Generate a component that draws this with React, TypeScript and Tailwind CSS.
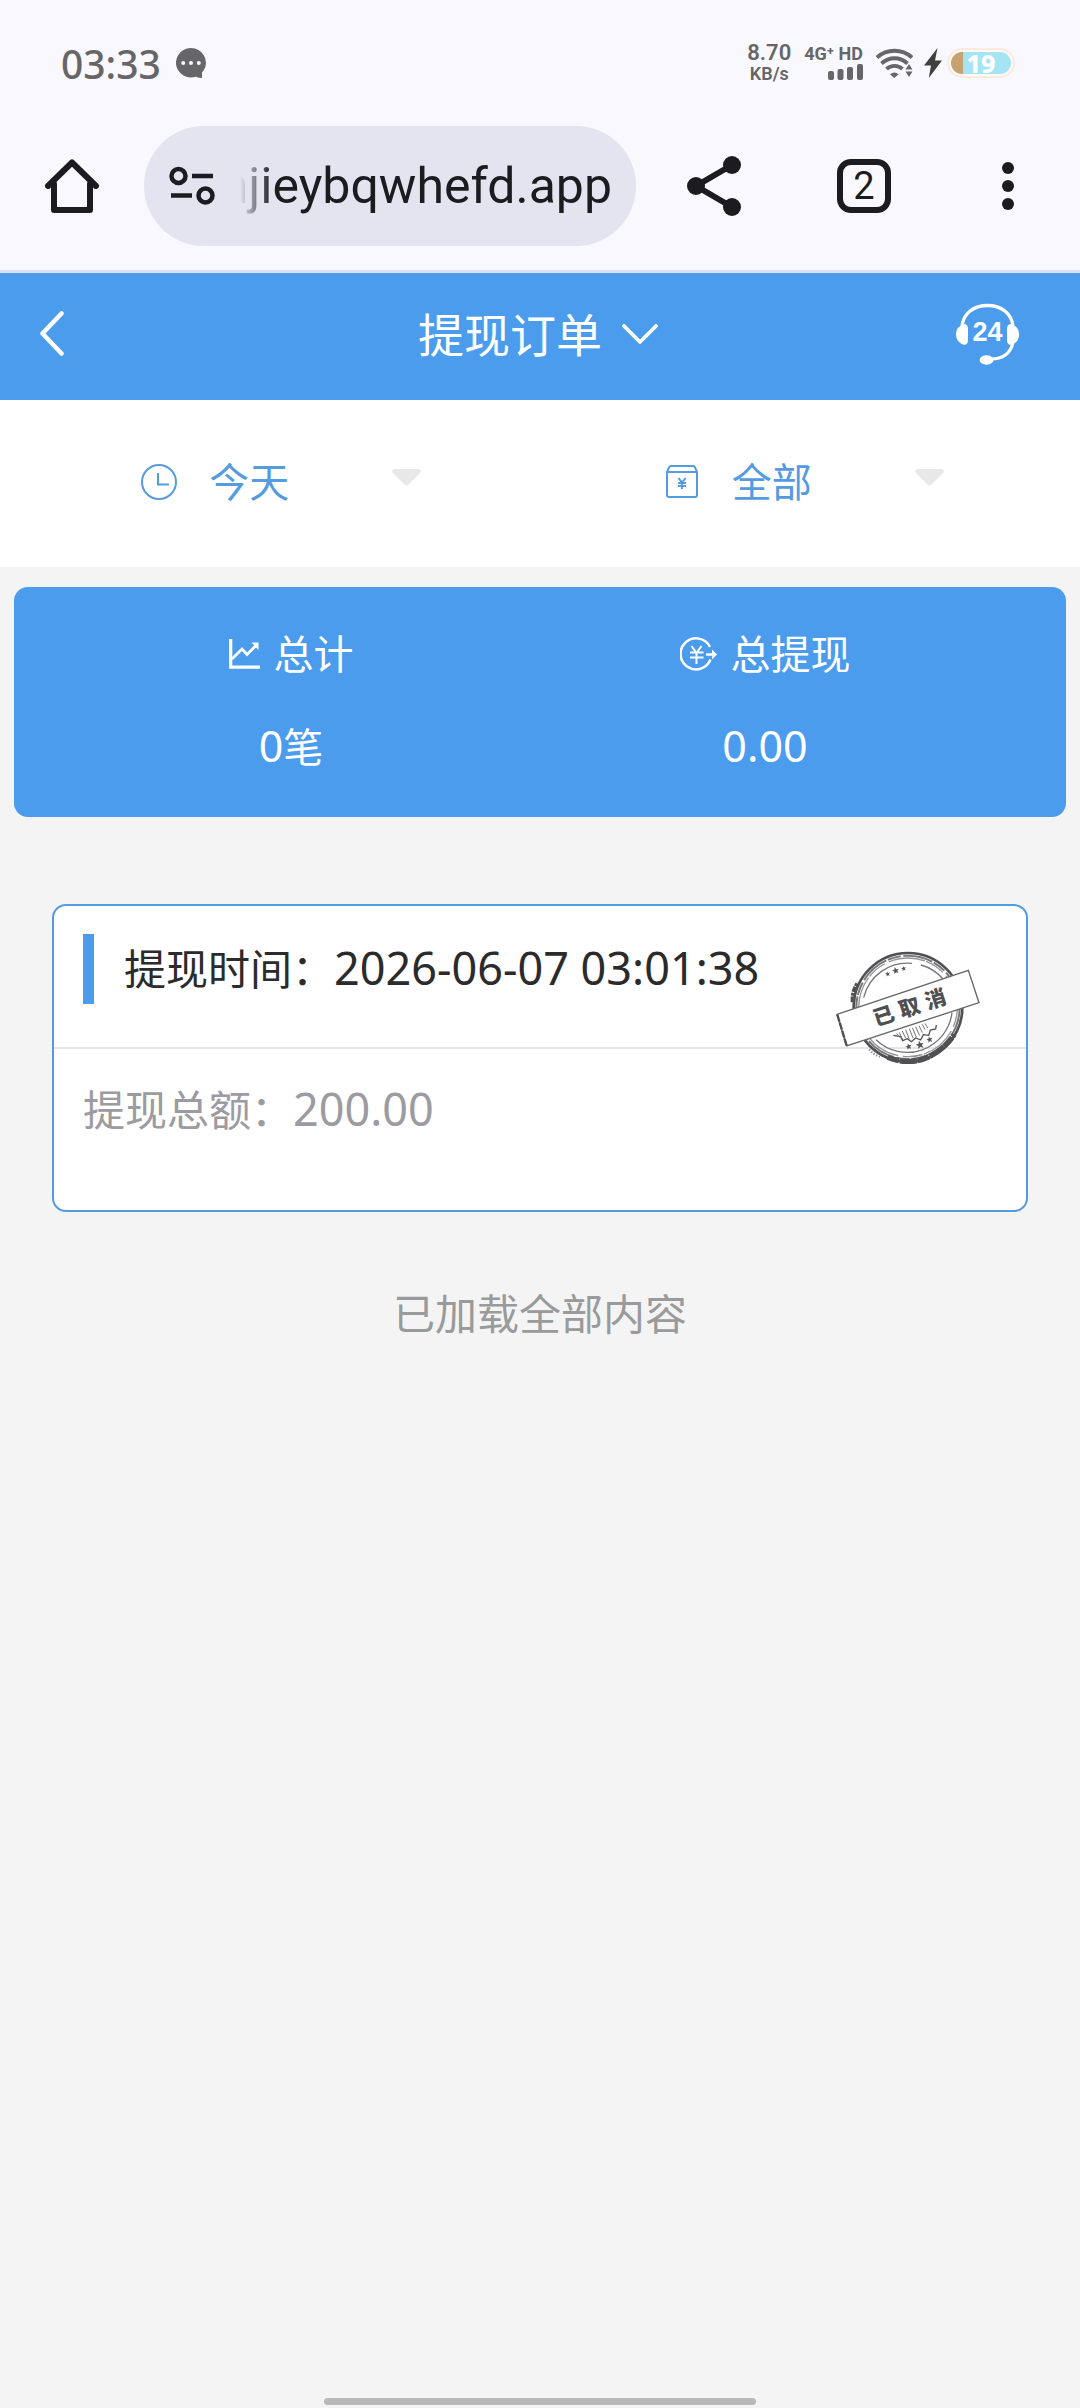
import React from 'react';

const HomeIcon = () => (
  <svg className="w-[54px] h-[54px]" viewBox="0 0 54 54" fill="none" stroke="#1b1b20" strokeWidth="6" strokeLinejoin="round" strokeLinecap="round">
    <path d="M9 25v26h36V25" />
    <path d="M3 27 27 3.500 51 27" />
  </svg>
);

const SiteSettingsIcon = () => (
  <svg className="w-[46px] h-[40px] shrink-0" viewBox="0 0 46 40" fill="none" stroke="#1b1b20">
    <circle cx="9.500" cy="10" r="7" strokeWidth="4.500" />
    <circle cx="36.500" cy="29.500" r="7" strokeWidth="4.500" />
    <path d="M23 10h21M2 29.500h21" strokeWidth="4.500" />
  </svg>
);

const ShareIcon = () => (
  <svg className="w-[54px] h-[60px]" viewBox="0 0 54 60" fill="#1b1b20">
    <path d="M45 9 9 30l36 21" fill="none" stroke="#1b1b20" strokeWidth="6" />
    <circle cx="45" cy="9" r="9" />
    <circle cx="9" cy="30" r="9" />
    <circle cx="45" cy="51" r="9" />
  </svg>
);

const MoreIcon = () => (
  <svg className="w-[12px] h-[48px]" viewBox="0 0 12 48" fill="#1b1b20">
    <circle cx="6" cy="6" r="6" />
    <circle cx="6" cy="24" r="6" />
    <circle cx="6" cy="42" r="6" />
  </svg>
);

const MessageIcon = () => (
  <svg className="w-[30px] h-[30px]" viewBox="0 0 30 30">
    <path d="M15 0a15 14.700 0 1 1-.1 0zM26 21v9q-4 0-8-2z" fill="#666668" />
    <g fill="#f9f8ff">
      <circle cx="7.200" cy="15" r="2" />
      <circle cx="15" cy="15" r="2" />
      <circle cx="22.800" cy="15" r="2" />
    </g>
  </svg>
);

const SignalIcon = () => (
  <svg className="w-[35px] h-[16px]" viewBox="0 0 35 16" fill="#666668">
    <rect x="0" y="7" width="6" height="9" rx="2" />
    <rect x="9.500" y="5" width="6" height="11" rx="2" />
    <rect x="19" y="3" width="6" height="13" rx="2" />
    <rect x="29" y="0" width="6" height="16" rx="2" />
  </svg>
);

const WifiIcon = () => (
  <svg className="w-[37px] h-[30px]" viewBox="0 0 37 30">
    <g fill="none" stroke="#666668" strokeWidth="3.800">
      <path d="M1 9.500C11 .500 26 .500 36 9.500" />
      <path d="M5.500 15.500C13 8.500 24 8.500 31.500 15.500" />
      <path d="M10.500 21C15 16.700 22 16.700 26.500 21" />
    </g>
    <g fill="#666668">
      <path d="M14 26.200q4.500-3.600 8.500 0L18.300 30z" />
      <path d="M33 16l3.500 5.500h-7zM33 29l3.500-5.500h-7z" />
    </g>
  </svg>
);

const BoltIcon = () => (
  <svg className="w-[18px] h-[30px]" viewBox="0 0 18 30" fill="#3f3f3c">
    <path d="M13.500 0 0 17.500h7L4.800 30 18 12.500h-7z" />
  </svg>
);

const HeadsetIcon = () => (
  <svg className="w-[63px] h-[62px]" viewBox="0 0 63 62" fill="#fff">
    <path d="M6 24C7 10 18 2.500 31.500 2.500S56 10 57 24" fill="none" stroke="#fff" strokeWidth="3.400" />
    <path d="M57 40C54 51 47 56 35 56" fill="none" stroke="#fff" strokeWidth="3" />
    <path d="M9 21q3 1 3 5v11q0 4-3 5-9-2-9-10.500T9 21zM54 21q-3 1-3 5v11q0 4 3 5 9-2 9-10.500T54 21z" />
    <ellipse cx="30.500" cy="57" rx="7" ry="4.700" />
    <text x="31.500" y="38" textAnchor="middle" fontFamily="Liberation Sans, sans-serif" fontSize="27" fontWeight="700">24</text>
  </svg>
);

const ClockIcon = () => (
  <svg className="w-[36px] h-[36px]" viewBox="0 0 36 36" fill="none" stroke="#559bdf" strokeWidth="2">
    <circle cx="18" cy="18" r="17" />
    <path d="M17 9v11.500h11" />
  </svg>
);

const WalletIcon = () => (
  <svg className="w-[36px] h-[36px]" viewBox="0 0 36 36" fill="none" stroke="#559bdf" strokeWidth="2">
    <path d="M3 8 5 3.500q.500-1.500 2-1.500h22q1.500 0 2 1.500L33 8v23q0 2-2 2H5q-2 0-2-2zM3 8h30" />
    <path d="m14.500 14 3.500 4.500 3.500-4.500M18 18v7M14 19h8M14 22h8" />
  </svg>
);

const CaretIcon = () => (
  <svg className="w-[29px] h-[17px] mb-2 shrink-0 pointer-events-none" viewBox="0 0 29 17" fill="#e8e8e8">
    <path d="M3 0h23q4 1 2.500 3.500L16 16q-1.500 1.500-3 0L.500 3.500Q-1 1 3 0z" />
  </svg>
);

const TrendIcon = () => (
  <svg className="w-[31px] h-[30px]" viewBox="0 0 31 30" fill="none" stroke="#fff">
    <path d="M1.700 0v28.200H31" strokeWidth="3.200" />
    <path d="m3 20 10-10 5 5.500L27 6.500" strokeWidth="2.800" />
    <path d="M22.500 3.500h7V11z" fill="#fff" stroke="none" />
  </svg>
);

const WithdrawIcon = () => (
  <svg className="w-[37px] h-[34px]" viewBox="0 0 37 34" fill="none" stroke="#fff" strokeWidth="2.500">
    <path d="M30 10A15.500 15.500 0 1 0 30.500 22.500" />
    <path d="m11.500 9 5 7 5-7M16.500 16v11M10 15.500h13.500M10 20.500h13.500" strokeWidth="2" />
    <path d="M26 17.500h7" />
    <path d="m32 12.500 5 5-5 5z" fill="#fff" stroke="none" />
  </svg>
);

const Star = ({ x, y, r }: { x: number; y: number; r: number }) => (
  <path
    transform={`translate(${x} ${y}) rotate(-15) scale(${r})`}
    d="M0-1 .26-.35.95-.31.42.13.59.81 0 .44-.59.81-.42.13-.95-.31-.26-.35z"
    fill="#55555a"
  />
);

const CancelledStamp = () => (
  <svg className="w-[144px] h-[113px]" viewBox="50 65 432 339">
    <g fill="none" stroke="#505052">
      <circle cx="266" cy="234" r="163" strokeWidth="8" />
      <circle cx="266" cy="234" r="155" strokeWidth="6" stroke="#77777a" strokeDasharray="90 5 40 8" />
      <circle cx="266" cy="234" r="148" strokeWidth="4" stroke="#959597" strokeDasharray="60 14 110 4" />
      <path d="M133 205A135 135 0 0 1 278 102M305 107a135 135 0 0 1 66 42M398 250A135 135 0 0 1 170 331" strokeWidth="4" stroke="#77777a" />
      <path d="M101 218q-2-34 16-57" strokeWidth="14" strokeDasharray="16 2 9 3" />
      <path d="M205 384q64 26 122-1 50-24 78-68" strokeWidth="16" strokeDasharray="35 3 52 2" />
      <path d="M150 360q12 17 32 22" strokeWidth="6" strokeDasharray="4 5" stroke="#8a8a8c" />
      <path d="m222 318 22 4 6 12 14-6 12 9 13-11 15 6 8-16 16 2 5-16 16-3 2-12" strokeWidth="4" />
      <path d="m232 312 8 12m0-15 9 20m0-24 10 22m0-26 11 29m0-32 11 28m-2-31 12 29m-2-32 12 27m-2-30 10 21m0-25 8 16m0-19 8 14" strokeWidth="3" stroke="#77777a" />
    </g>
    <Star x={205} y={134} r={8} />
    <Star x={229} y={124} r={11} />
    <Star x={253} y={118} r={8} />
    <Star x={268} y={352} r={10} />
    <Star x={302} y={347} r={13} />
    <Star x={331} y={331} r={10} />
    <path d="M53 255 447 123l32 97L82 350z" fill="#fff" stroke="#66666a" strokeWidth="4" />
    <path d="m54 256 28 93" stroke="#505052" strokeWidth="7" strokeDasharray="22 3" />
    <text
      transform="translate(170 291) rotate(-18)"
      x="0 81 163"
      y="0"
      fill="#505052"
      fontFamily="Noto Sans CJK SC, sans-serif"
      fontSize="63"
      fontWeight="900"
    >
      已取消
    </text>
  </svg>
);

const StatusBar = () => (
  <div className="h-[126px] pl-[61px] pr-[65px] flex items-center justify-between text-[#666668]">
    <div className="flex items-center gap-[15px]">
      <span className="text-[39px] leading-none font-medium">03:33</span>
      <MessageIcon />
    </div>
    <div className="flex items-center font-semibold">
      <div className="mr-[13px] text-center font-[Roboto,sans-serif]">
        <div className="text-[22px] leading-[22px]">8.70</div>
        <div className="text-[18px] leading-[20px]">KB/s</div>
      </div>
      <div className="mr-[13px] flex flex-col items-end gap-[2px] font-[Roboto,sans-serif]">
        <span className="text-[18px] leading-[16px] font-bold">4G⁺ HD</span>
        <SignalIcon />
      </div>
      <WifiIcon />
      <div className="ml-[11px] mr-[5px]">
        <BoltIcon />
      </div>
      <div className="w-[68px] h-[30px] p-[2px] rounded-full bg-[#fbebdc]">
        <div className="h-full p-[2px] rounded-full bg-[#fdfaf8]">
          <div className="h-full rounded-full bg-[linear-gradient(90deg,#c8a171_20%,#a5e4f2_20%)] flex items-center justify-center text-[25px] leading-none font-extrabold text-white">
            19
          </div>
        </div>
      </div>
    </div>
  </div>
);

const BrowserToolbar = () => (
  <div className="h-[147px] border-b-[3px] border-[#dde0ef] flex items-start">
    <button className="w-36 h-[120px] shrink-0 flex items-center justify-center" aria-label="主页">
      <HomeIcon />
    </button>
    <div className="flex-1 min-w-0 h-[120px] rounded-full bg-[#e4e4f0] pl-[25px] pr-[24px] flex items-center gap-[25px]">
      <SiteSettingsIcon />
      <input
        className="flex-1 min-w-0 h-[72px] bg-transparent outline-none font-[Roboto,sans-serif] text-[50px] text-[#1b1b20] [mask-image:linear-gradient(90deg,transparent,black_32px)]"
        dir="rtl"
        aria-label="网址"
        defaultValue="njieybqwhefd.app"
      />
    </div>
    <button className="ml-1.5 w-36 h-[120px] shrink-0 flex items-center justify-center" aria-label="分享">
      <ShareIcon />
    </button>
    <button className="ml-1.5 w-36 h-[120px] shrink-0 flex items-center justify-center" aria-label="标签页">
      <span className="w-[54px] h-[54px] border-[6px] border-[#1b1b20] rounded-[14px] flex items-center justify-center font-[Roboto,sans-serif] text-[38px] leading-none text-[#1b1b20]">
        2
      </span>
    </button>
    <button className="w-36 h-[120px] shrink-0 flex items-center justify-center" aria-label="更多">
      <MoreIcon />
    </button>
  </div>
);

const PageHeader = () => (
  <header className="h-[127px] pb-1.5 bg-[#4b9cec] text-white grid grid-cols-[1fr_auto_1fr] items-center">
    <button className="pl-[40px] h-full" aria-label="返回">
      <svg className="w-[24px] h-[45px]" viewBox="0 0 24 45" fill="none" stroke="currentColor" strokeWidth="4.500" strokeLinecap="round" strokeLinejoin="round">
        <path d="M21.500 2.500 2.500 22.500l19 20" />
      </svg>
    </button>
    <h1>
      <button className="pr-1 flex items-center gap-[20px] text-[46px] leading-[60px]">
        提现订单
        <svg className="w-[36px] h-[20px]" viewBox="0 0 36 20" fill="none" stroke="currentColor" strokeWidth="3.800" strokeLinecap="round" strokeLinejoin="round">
          <path d="m2 2 16 16L34 2" />
        </svg>
      </button>
    </h1>
    <button className="pr-[61px] h-full flex items-center justify-end" aria-label="客服">
      <HeadsetIcon />
    </button>
  </header>
);

const filters = [
  { id: 'date', label: '日期', icon: <ClockIcon />, options: ['今天', '昨天', '七日'] },
  { id: 'type', label: '类型', icon: <WalletIcon />, options: ['全部', '已完成', '已取消'] },
];

const FilterBar = () => (
  <div className="h-[167px] pl-[20px] pr-[15px] pb-1 bg-white grid grid-cols-2 items-center justify-items-center">
    {filters.map((filter) => (
      <div key={filter.id} className="w-[280px] flex items-center">
        <label htmlFor={filter.id} aria-label={filter.label}>
          {filter.icon}
        </label>
        <select
          id={filter.id}
          className="appearance-none flex-1 min-w-0 h-[60px] pl-[32px] bg-transparent outline-none text-[40px] leading-[60px] text-[#559bdf]"
        >
          {filter.options.map((option) => (
            <option key={option}>{option}</option>
          ))}
        </select>
        <CaretIcon />
      </div>
    ))}
  </div>
);

const Summary = () => (
  <section className="mt-5 mx-[14px] h-[230px] pb-1 pl-10 pr-16 rounded-[14px] bg-[#4b9cec] text-white grid grid-cols-2 items-center text-center">
    <div>
      <div className="flex items-center justify-center gap-[14px] text-[40px] leading-[60px]">
        <TrendIcon />
        总计
      </div>
      <div className="mt-8 text-[40px] leading-[60px]">
        <span className="text-[43px]">0</span>笔
      </div>
    </div>
    <div>
      <div className="flex items-center justify-center gap-[14px] text-[40px] leading-[60px]">
        <WithdrawIcon />
        总提现
      </div>
      <div className="mt-8 text-[43px] leading-[60px]">0.00</div>
    </div>
  </section>
);

const OrderCard = () => (
  <article className="relative mt-[87px] mx-[52px] h-[308px] bg-white border-2 border-[#559bdf] rounded-[14px] text-[42px] leading-[60px]">
    <div className="h-[143px] pt-[28px] pl-[29px] border-b-2 border-[#e6e6e6] flex items-start">
      <div className="w-[11px] h-[70px] bg-[#4b9cec]" />
      <div className="pl-[30px] pt-1 text-[#2b2b2b]">
        提现时间：<span className="text-[45px]">2026-06-07 03:01:38</span>
      </div>
    </div>
    <div className="pt-[30px] pl-[29px] text-[#9b9ba1]">
      提现总额：<span className="text-[45px]">200.00</span>
    </div>
    <div className="absolute top-[45px] right-[46px]">
      <CancelledStamp />
    </div>
  </article>
);

const App = () => {
  return (
    <div lang="zh-CN" className="min-h-screen flex flex-col bg-[#f4f4f4] font-['Noto_Sans','Noto_Sans_CJK_SC',sans-serif]">
      <div className="bg-[#f9f8ff]">
        <StatusBar />
        <BrowserToolbar />
      </div>
      <PageHeader />
      <main className="flex-1">
        <FilterBar />
        <Summary />
        <OrderCard />
        <p className="mt-[72px] text-center text-[42px] leading-[60px] text-[#999a9b]">已加载全部内容</p>
      </main>
      <div className="w-2/5 h-[7px] mb-[3px] mx-auto rounded-full bg-[#b9b9b9]" />
    </div>
  );
};

export default App;
